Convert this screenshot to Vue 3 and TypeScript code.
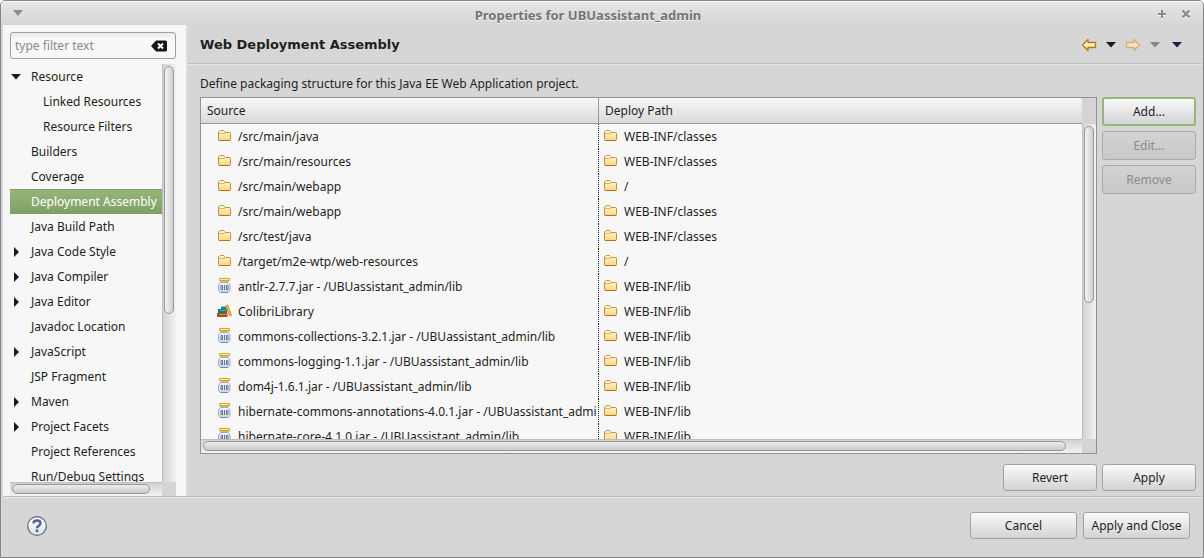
<script setup lang="ts">
interface TreeItem {
  label: string
  level: number
  state: 'open' | 'closed' | 'leaf'
  selected?: boolean
}

interface Entry {
  icon: 'folder' | 'jar' | 'books'
  source: string
  path: string
}

const tree: TreeItem[] = [
  { label: 'Resource', level: 0, state: 'open' },
  { label: 'Linked Resources', level: 1, state: 'leaf' },
  { label: 'Resource Filters', level: 1, state: 'leaf' },
  { label: 'Builders', level: 0, state: 'leaf' },
  { label: 'Coverage', level: 0, state: 'leaf' },
  { label: 'Deployment Assembly', level: 0, state: 'leaf', selected: true },
  { label: 'Java Build Path', level: 0, state: 'leaf' },
  { label: 'Java Code Style', level: 0, state: 'closed' },
  { label: 'Java Compiler', level: 0, state: 'closed' },
  { label: 'Java Editor', level: 0, state: 'closed' },
  { label: 'Javadoc Location', level: 0, state: 'leaf' },
  { label: 'JavaScript', level: 0, state: 'closed' },
  { label: 'JSP Fragment', level: 0, state: 'leaf' },
  { label: 'Maven', level: 0, state: 'closed' },
  { label: 'Project Facets', level: 0, state: 'closed' },
  { label: 'Project References', level: 0, state: 'leaf' },
  { label: 'Run/Debug Settings', level: 0, state: 'leaf' },
]

const entries: Entry[] = [
  { icon: 'folder', source: '/src/main/java', path: 'WEB-INF/classes' },
  { icon: 'folder', source: '/src/main/resources', path: 'WEB-INF/classes' },
  { icon: 'folder', source: '/src/main/webapp', path: '/' },
  { icon: 'folder', source: '/src/main/webapp', path: 'WEB-INF/classes' },
  { icon: 'folder', source: '/src/test/java', path: 'WEB-INF/classes' },
  { icon: 'folder', source: '/target/m2e-wtp/web-resources', path: '/' },
  { icon: 'jar', source: 'antlr-2.7.7.jar - /UBUassistant_admin/lib', path: 'WEB-INF/lib' },
  { icon: 'books', source: 'ColibriLibrary', path: 'WEB-INF/lib' },
  { icon: 'jar', source: 'commons-collections-3.2.1.jar - /UBUassistant_admin/lib', path: 'WEB-INF/lib' },
  { icon: 'jar', source: 'commons-logging-1.1.jar - /UBUassistant_admin/lib', path: 'WEB-INF/lib' },
  { icon: 'jar', source: 'dom4j-1.6.1.jar - /UBUassistant_admin/lib', path: 'WEB-INF/lib' },
  { icon: 'jar', source: 'hibernate-commons-annotations-4.0.1.jar - /UBUassistant_admin/lib', path: 'WEB-INF/lib' },
  { icon: 'jar', source: 'hibernate-core-4.1.0.jar - /UBUassistant_admin/lib', path: 'WEB-INF/lib' },
]
</script>

<template>
  <div class="window">
    <svg class="defs" width="0" height="0" aria-hidden="true">
      <defs>
        <linearGradient id="gFolder" x1="0" y1="0" x2="0" y2="1">
          <stop offset="0" stop-color="#fffbe6" />
          <stop offset="1" stop-color="#ffd576" />
        </linearGradient>
        <linearGradient id="gArrow" x1="0" y1="0" x2="0" y2="1">
          <stop offset="0" stop-color="#ffffff" />
          <stop offset="1" stop-color="#fde38a" />
        </linearGradient>
        <linearGradient id="gJar" x1="0" y1="0" x2="0" y2="1">
          <stop offset="0" stop-color="#f4f8fd" />
          <stop offset="1" stop-color="#c3d6ee" />
        </linearGradient>
        <linearGradient id="gHelp" x1="0" y1="0" x2="0" y2="1">
          <stop offset="0" stop-color="#ffffff" />
          <stop offset="1" stop-color="#dfe3ea" />
        </linearGradient>
        <symbol id="folder" viewBox="0 0 16 16">
          <path d="M1.500 11.500v-7.500l1-1 1-.5h3l1 1 .5 1h4.500q1 0 1 1v6q0 1-1 1h-10q-1 0-1-1z" fill="url(#gFolder)" stroke="#c58d3e" />
          <path d="M2 5.500h5l1.500-1" fill="none" stroke="#e0b468" />
          <path d="M2 12.500h11" stroke="#b0712c" />
        </symbol>
        <symbol id="jar" viewBox="0 0 16 16">
          <path d="M3.500 4.500h7.500l2 2.500v5.500l-2 2h-7.500l-2-2v-5.500z" fill="url(#gJar)" stroke="#9aaeca" stroke-linejoin="round" />
          <path d="M3.500 14.500h7.500" stroke="#6d8ab8" />
          <rect x="2" y="0" width="11" height="3" rx="1" fill="#d9a62c" />
          <path d="M3 1.500h9" stroke="#fff0a8" />
          <path d="M3 3.500h9" stroke="#c7b98c" />
          <path d="M4 7.500h1.500v4h-1.500zM7.500 7v5M9.500 7.500h1.500v4h-1.500z" fill="none" stroke="#6a7280" />
        </symbol>
        <symbol id="books" viewBox="0 0 16 16">
          <path d="M4 3.500h7v3h-7z" fill="#1c86b0" />
          <path d="M1 6h9v4h-9z" fill="#167a6c" />
          <path d="M3 7.500h6" stroke="#4cc09c" />
          <path d="M0 10h10.500v4h-10.500z" fill="#a84d25" />
          <path d="M2 11.500h8" stroke="#d48a5c" />
          <path d="M8 3l3-1.500 4 11-2.500 1z" fill="#e88722" />
          <path d="M10 3l3.500 9.500" stroke="#ffc066" />
        </symbol>
      </defs>
    </svg>

    <header class="titlebar">
      <button class="plain menu" aria-label="Window menu">
        <svg width="10" height="6"><path d="M0 0h10l-5 6z" fill="#8c8c8c" /></svg>
      </button>
      <h1>Properties for UBUassistant_admin</h1>
      <div class="wincontrols">
        <button class="plain" aria-label="Maximize">
          <svg width="10" height="10"><path d="M5 2v8M1 6h8" stroke="#fff" stroke-width="2" /><path d="M5 1v8M1 5h8" stroke="#8c8c8c" stroke-width="2" /></svg>
        </button>
        <button class="plain" aria-label="Close">
          <svg width="10" height="10"><path d="M1.500 2.500l7 7M8.500 2.500l-7 7" stroke="#fff" stroke-width="2.400" /><path d="M1.500 1.500l7 7M8.500 1.500l-7 7" stroke="#8c8c8c" stroke-width="2.400" /></svg>
        </button>
      </div>
    </header>

    <main class="content">
      <aside class="sidebar">
        <div class="filter">
          <input type="text" placeholder="type filter text" aria-label="Filter text" />
          <button class="plain" aria-label="Clear filter">
            <svg width="16" height="12"><path d="M0 6l5-5.500h9.500q1.500 0 1.500 1.500v8q0 1.500-1.500 1.500h-9.500z" fill="#161616" /><path d="M7 3.500l5 5M12 3.500l-5 5" stroke="#fff" stroke-width="2" /></svg>
          </button>
        </div>
        <div class="treebox">
          <ul class="tree">
            <li v-for="item in tree" :key="item.label" :class="{ selected: item.selected, child: item.level === 1 }">
              <span class="twisty">
                <svg v-if="item.state === 'open'" width="10" height="6"><path d="M0 0h10l-5 5.500z" fill="#1a1a1a" /></svg>
                <svg v-else-if="item.state === 'closed'" width="10" height="10"><path d="M3 0v10l5-5z" fill="#1a1a1a" /></svg>
              </span>
              <span>{{ item.label }}</span>
            </li>
          </ul>
          <div class="vbar"><div class="thumb tree-v"></div></div>
          <div class="hbar"><div class="thumb tree-h"></div></div>
          <div class="corner"></div>
        </div>
      </aside>

      <section class="page">
        <div class="heading">
          <h2>Web Deployment Assembly</h2>
          <nav class="history">
            <button class="plain" aria-label="Back">
              <svg width="16" height="14"><path d="M1.500 7l5.500-5.500v3h7.500v5h-7.500v3z" fill="url(#gArrow)" stroke="#b87710" stroke-width="1.300" stroke-linejoin="round" /></svg>
            </button>
            <button class="plain" aria-label="Back history">
              <svg width="10" height="6"><path d="M0 0h10l-5 5.500z" fill="#1a1a1a" /></svg>
            </button>
            <button class="plain" aria-label="Forward" disabled>
              <svg width="16" height="14"><path d="M14.500 7l-5.500-5.500v3h-7.500v5h7.500v3z" fill="#f0e3c4" stroke="#cfae7c" stroke-width="1.300" stroke-linejoin="round" /></svg>
            </button>
            <button class="plain" aria-label="Forward history" disabled>
              <svg width="10" height="6"><path d="M0 0h10l-5 5.500z" fill="#858585" /></svg>
            </button>
            <button class="plain viewmenu" aria-label="View menu">
              <svg width="10" height="6"><path d="M0 0h10l-5 5.500z" fill="#2c1a44" /></svg>
            </button>
          </nav>
        </div>

        <div class="body">
          <p>Define packaging structure for this Java EE Web Application project.</p>
          <div class="assembly">
            <div class="tablebox">
              <div class="viewport">
                <table>
                  <thead>
                    <tr><th class="src">Source</th><th>Deploy Path</th></tr>
                  </thead>
                  <tbody>
                    <tr v-for="(entry, i) in entries" :key="i">
                      <td class="src"><div class="cell"><svg width="16" height="16"><use :href="'#' + entry.icon" /></svg><span>{{ entry.source }}</span></div></td>
                      <td><div class="cell"><svg width="16" height="16"><use href="#folder" /></svg><span>{{ entry.path }}</span></div></td>
                    </tr>
                  </tbody>
                </table>
              </div>
              <div class="side">
                <div class="corner head"></div>
                <div class="vbar"><div class="thumb table-v"></div></div>
              </div>
              <div class="hbar"><div class="thumb table-h"></div></div>
              <div class="corner"></div>
            </div>
            <div class="actions">
              <button class="btn default">Add...</button>
              <button class="btn" disabled>Edit...</button>
              <button class="btn" disabled>Remove</button>
            </div>
          </div>
          <div class="pagebuttons">
            <button class="btn">Revert</button>
            <button class="btn">Apply</button>
          </div>
        </div>
      </section>
    </main>

    <footer class="footer">
      <button class="plain help" aria-label="Help">
        <svg width="22" height="22" viewBox="0 0 22 22"><circle cx="11" cy="11" r="9.300" fill="url(#gHelp)" stroke="#5a6a8c" stroke-width="1.200" /><path d="M7.500 8.500q0-3 3.500-3t3.500 2.700q0 1.600-1.900 2.700-1.600 1-1.600 2.300" fill="none" stroke="#52648c" stroke-width="2.400" /><rect x="9.700" y="14.500" width="2.600" height="2.600" fill="#52648c" /></svg>
      </button>
      <button class="btn wide">Cancel</button>
      <button class="btn wide">Apply and Close</button>
    </footer>
  </div>
</template>

<style>
body {
  margin: 0;
  background: #fff;
}
</style>

<style scoped>
* {
  box-sizing: border-box;
}
.window {
  min-height: 100vh;
  display: flex;
  flex-direction: column;
  border: 1px solid #868686;
  border-radius: 5px 5px 0 0;
  background: #d6d6d6;
  color: #1e1e1e;
  font: 12px/18px "Noto Sans", sans-serif;
  overflow: hidden;
}
.defs {
  position: absolute;
}
svg {
  display: block;
  flex: none;
}
.plain {
  border: 0;
  padding: 0;
  background: none;
}
.titlebar {
  height: 24px;
  display: grid;
  grid-template-columns: 40px 1fr 68px;
  align-items: center;
  background: linear-gradient(#e6e6e6, #d6d6d6);
  box-shadow: inset 0 1px #fafafa;
}
.menu {
  padding-left: 12px;
}
.titlebar h1 {
  margin: 0;
  padding-top: 3px;
  text-align: center;
  font: bold 13px/18px "Noto Sans", sans-serif;
  color: #747474;
  text-shadow: 0 1px #f4f4f4;
}
.wincontrols {
  display: flex;
  gap: 14px;
  padding: 2px 0 0 22px;
}
.content {
  flex: 1;
  display: flex;
  margin: 0 2px;
  border-bottom: 1px solid #bcbcbc;
  box-shadow: 0 1px #ececec;
}
.sidebar {
  width: 185px;
  display: flex;
  flex-direction: column;
  padding: 7px 10px 0 7px;
  background: #f7f7f7;
  border-right: 2px solid #dedede;
}
.filter {
  height: 27px;
  display: flex;
  align-items: center;
  padding: 0 8px 0 4px;
  border: 1px solid #a0a0a0;
  border-radius: 3px;
  background: linear-gradient(#e9e9e9, #f8f8f8 6px);
}
.filter input {
  flex: 1;
  min-width: 0;
  border: 0;
  padding: 0;
  outline: 0;
  background: none;
  font: inherit;
}
.filter input::placeholder {
  color: #8b8b8b;
}
.treebox {
  flex: 1;
  display: grid;
  grid-template: minmax(0, 1fr) 14px / minmax(0, 1fr) 14px;
  margin-top: 5px;
}
.tree {
  height: 418px;
  margin: 0;
  padding: 0;
  list-style: none;
  overflow: hidden;
  white-space: nowrap;
}
.tree li {
  height: 25px;
  display: flex;
  align-items: center;
}
.tree li.child {
  padding-left: 12px;
}
.tree li.selected {
  color: #fff;
  background: linear-gradient(#98b67c, #809f62);
  box-shadow: inset 0 1px #81996c, inset 0 -1px #81996c;
}
.twisty {
  width: 21px;
  padding-left: 1px;
}
.vbar {
  padding: 2px 1px;
  border-left: 1px solid #c0c0c0;
  background: linear-gradient(90deg, #d2d2d2, #f2f2f2);
}
.hbar {
  padding: 1px 2px;
  border-top: 1px solid #bebebe;
  background: linear-gradient(#d2d2d2, #f2f2f2);
}
.thumb {
  border: 1px solid #979797;
  border-radius: 6px;
}
.vbar .thumb {
  width: 10px;
  background: linear-gradient(90deg, #f4f4f4, #cecece);
}
.hbar .thumb {
  height: 10px;
  background: linear-gradient(#ededed, #cacaca);
}
.tree-v {
  height: 60%;
}
.tree-h {
  width: 93%;
}
.table-v {
  height: 57%;
}
.table-h {
  width: calc(100% - 14px);
}
.corner {
  background: #d4d4d4;
}
.page {
  flex: 1;
  min-width: 0;
  display: flex;
  flex-direction: column;
}
.heading {
  height: 39px;
  display: flex;
  align-items: center;
  justify-content: space-between;
  padding: 2px 19px 0 12px;
  border-bottom: 1px solid #bfbfbf;
  box-shadow: 0 1px #e6e6e6;
}
.heading h2 {
  margin: 0;
  font: bold 13px/18px "DejaVu Sans", sans-serif;
}
.history {
  display: flex;
  align-items: center;
  gap: 9px;
}
.viewmenu {
  margin-left: 3px;
}
.body {
  flex: 1;
  display: flex;
  flex-direction: column;
  padding: 11px 5px 5px 12px;
}
.body p {
  margin: 0 0 4px;
}
.assembly {
  flex: 1;
  display: flex;
  gap: 5px;
}
.tablebox {
  flex: 1;
  min-width: 0;
  display: grid;
  grid-template: minmax(0, 1fr) 14px / minmax(0, 1fr) 14px;
  border: 1px solid #929292;
  background: #f7f7f7;
}
.viewport {
  height: 341px;
  overflow: hidden;
}
.side {
  display: flex;
  flex-direction: column;
}
.side .vbar {
  flex: 1;
}
.head {
  height: 26px;
}
table {
  width: 100%;
  table-layout: fixed;
  border-spacing: 0;
}
th {
  height: 26px;
  padding: 0 6px;
  text-align: left;
  font-weight: normal;
  border-bottom: 1px solid #979797;
  background: linear-gradient(#f8f8f8, #d9d9d9);
}
.src {
  width: 398px;
}
th.src {
  border-right: 1px solid #979797;
}
td {
  height: 25px;
  padding: 0 2px 0 4px;
}
td.src {
  padding: 0 3px 0 16px;
  background: repeating-linear-gradient(#1e1e1e 0 1px, transparent 1px 2px) right / 1px 100% no-repeat;
}
.cell {
  height: 25px;
  display: flex;
  gap: 5px;
  overflow: hidden;
  white-space: nowrap;
  line-height: 25px;
}
.cell svg {
  margin-top: 4px;
}
.actions {
  display: flex;
  flex-direction: column;
  gap: 5px;
}
.btn {
  min-width: 94px;
  height: 27px;
  padding: 0 6px;
  border: 1px solid #a3a3a3;
  border-radius: 3px;
  background: linear-gradient(#fafafa, #d3d3d3);
  color: #1e1e1e;
  font: inherit;
}
.actions .btn {
  height: 29px;
}
.btn.default {
  border: 2px solid #98b67c;
}
.btn:disabled {
  color: #8b8b8b;
  border-color: #aaa;
  background: linear-gradient(#d3d3d3, #c8c8c8);
}
.pagebuttons {
  display: flex;
  justify-content: flex-end;
  gap: 5px;
  padding-top: 10px;
}
.footer {
  display: flex;
  align-items: center;
  gap: 6px;
  height: 60px;
  padding: 0 13px 3px 25px;
}
.help {
  margin-right: auto;
}
.wide {
  min-width: 107px;
}
</style>
